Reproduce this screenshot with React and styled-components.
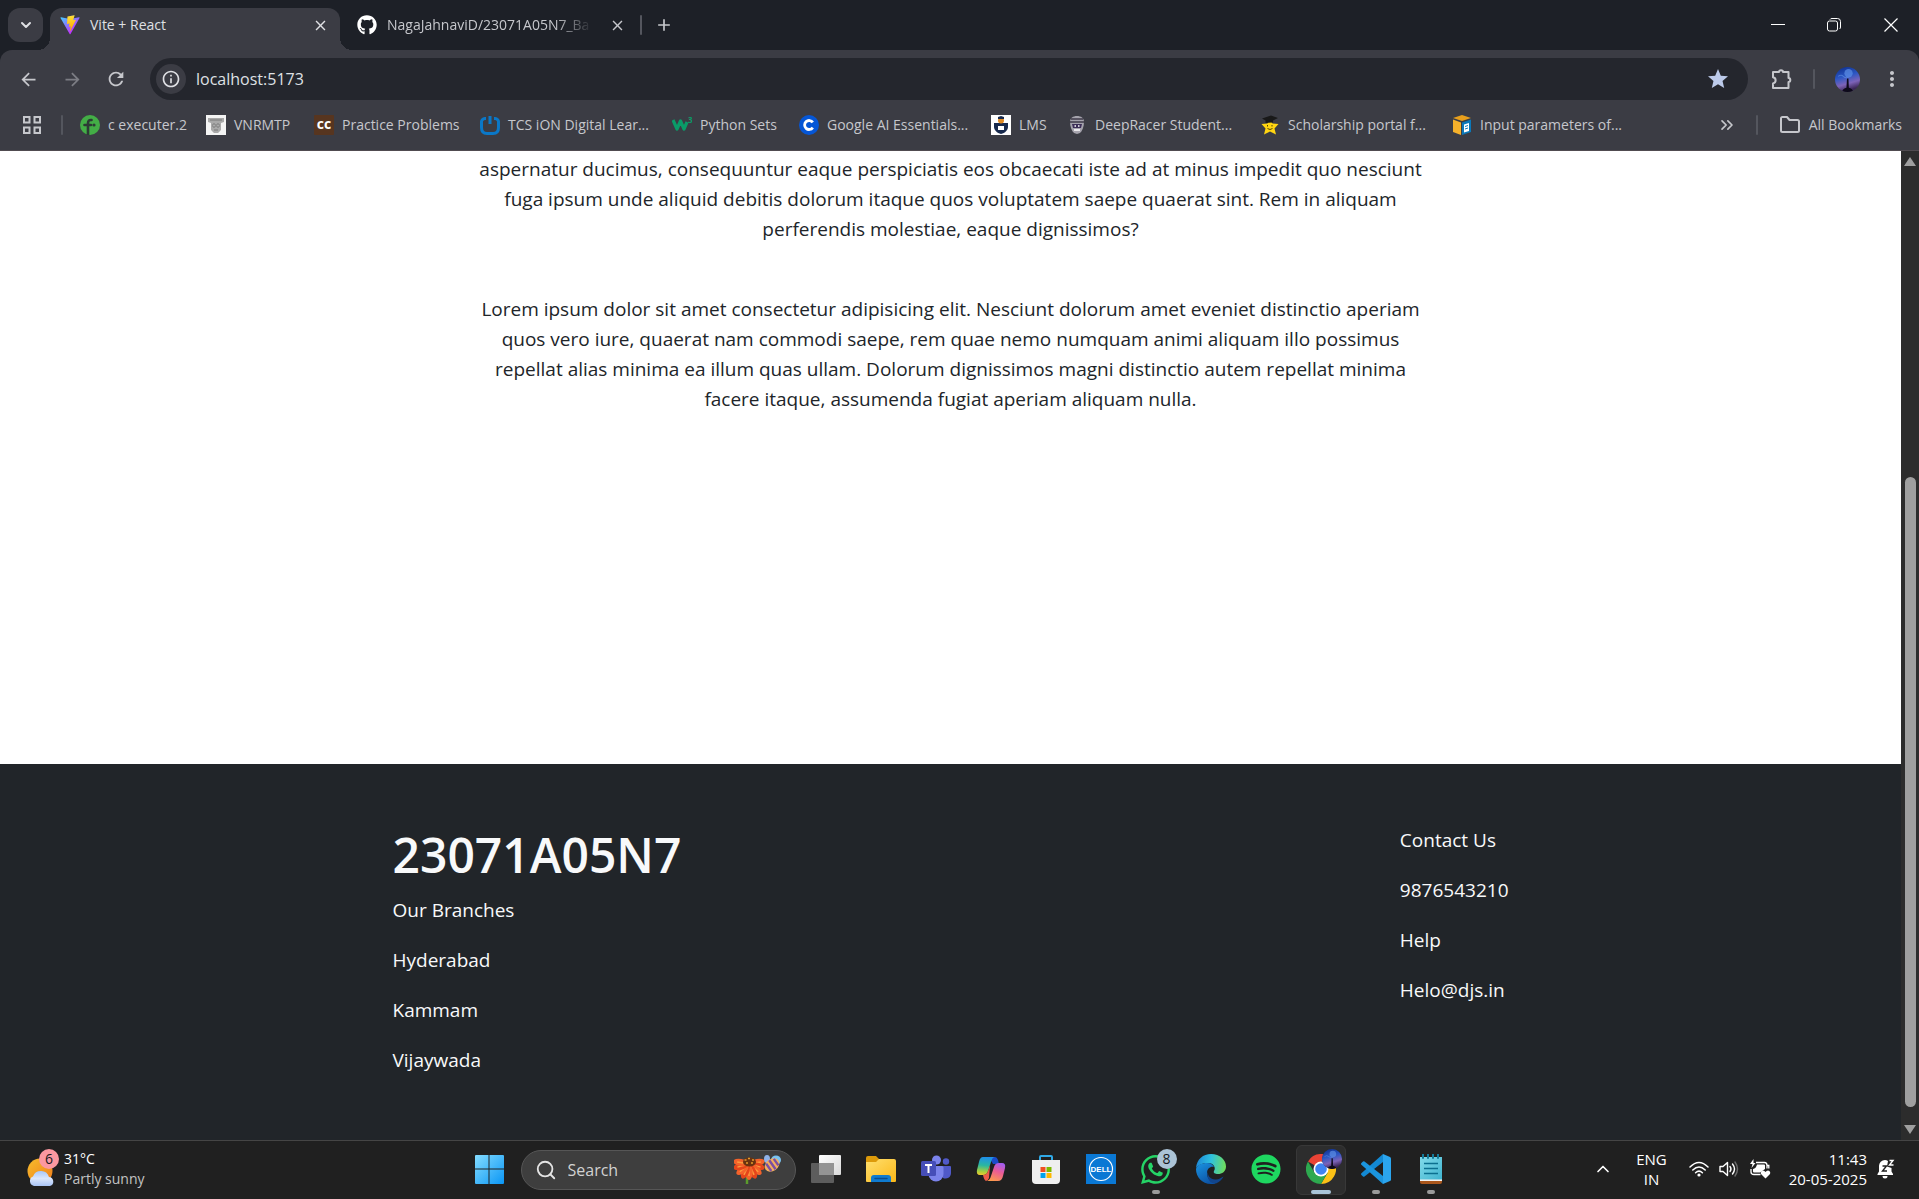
import React from "react";
import styled, { createGlobalStyle, css } from "styled-components";
import { FaGithub, FaWhatsapp, FaSpotify } from "react-icons/fa";
import {
  MdArrowBack,
  MdArrowForward,
  MdRefresh,
  MdInfoOutline,
  MdStar,
  MdMoreVert,
  MdClose,
  MdAdd,
} from "react-icons/md";
import { ChevronDown, ChevronUp, ChevronsRight, Search } from "lucide-react";

const color = {
  strip: "#1d2027",
  toolbar: "#3b3c44",
  field: "#24262d",
  text: "#dfe0e4",
  muted: "#c6c7cc",
  dark: "#212529",
  taskbar: "#202020",
};

const sans = `"Segoe UI", "Open Sans", "Noto Sans", sans-serif`;

const Global = createGlobalStyle`
  *, *::before, *::after { box-sizing: border-box; }
  html, body { margin: 0; height: 100%; background: ${color.taskbar}; }
  body { font-family: ${sans}; overflow: hidden; }
  button, input { font: inherit; color: inherit; }
  p, h1 { margin: 0; padding: 0; }
  svg { display: block; flex: none; }
`;

const Screen = styled.div`
  display: flex;
  flex-direction: column;
  height: 100vh;
`;

const IconButton = styled.button`
  display: flex;
  align-items: center;
  justify-content: center;
  flex: none;
  width: ${(p) => p.$w || 44}px;
  height: ${(p) => p.$h || 34}px;
  padding: 0;
  border: 0;
  border-radius: 12px;
  background: ${(p) => p.$bg || "transparent"};
  color: ${(p) => p.$color || color.muted};
`;

const Divider = styled.span`
  flex: none;
  width: 2px;
  height: 20px;
  margin: 0 ${(p) => p.$m || 0}px;
  border-radius: 1px;
  background: #54565e;
`;

/* ---------- Tab strip ---------- */

const TabStrip = styled.div`
  display: flex;
  align-items: center;
  height: 50px;
  padding-left: 8px;
  background: ${color.strip};
`;

const Tab = styled.div`
  position: relative;
  display: flex;
  align-items: center;
  gap: 10px;
  width: ${(p) => p.$w}px;
  height: 42px;
  padding: 0 10px 8px ${(p) => (p.$active ? 10 : 17)}px;
  align-self: flex-end;
  font-size: 14px;
  color: ${color.muted};
  ${(p) =>
    p.$active &&
    css`
      margin-left: 7px;
      border-radius: 12px 12px 0 0;
      background: ${color.toolbar};
      color: ${color.text};
      &::before,
      &::after {
        content: "";
        position: absolute;
        bottom: 0;
        width: 12px;
        height: 12px;
      }
      &::before {
        right: 100%;
        background: radial-gradient(circle at 0 0, transparent 12px, ${color.toolbar} 12px);
      }
      &::after {
        left: 100%;
        background: radial-gradient(circle at 100% 0, transparent 12px, ${color.toolbar} 12px);
      }
    `}
`;

const TabTitle = styled.span`
  flex: 1;
  line-height: 20px;
  white-space: nowrap;
  ${(p) => p.$fade && css`
    mask-image: linear-gradient(90deg, #000 80%, transparent 98%);
  `}
`;

const WindowControls = styled.div`
  display: flex;
  margin-left: auto;
`;

/* ---------- Toolbar ---------- */

const ToolbarWrap = styled.div`
  background: ${color.strip};
`;

const Toolbar = styled.div`
  display: flex;
  align-items: center;
  height: 58px;
  padding: 0 5px 0 6px;
  border-radius: 12px 12px 0 0;
  background: ${color.toolbar};
`;

const Omnibox = styled.form`
  display: flex;
  align-items: center;
  flex: 1;
  height: 42px;
  margin: 0 12px;
  padding: 0 8px 0 6px;
  border-radius: 21px;
  background: ${color.field};
`;

const SiteInfo = styled(IconButton)`
  border-radius: 50%;
`;

const UrlInput = styled.input`
  flex: 1;
  min-width: 0;
  height: 30px;
  margin-left: 10px;
  padding: 0;
  border: 0;
  outline: 0;
  background: transparent;
  color: ${color.text};
  font-size: 16px;
`;

/* ---------- Bookmarks ---------- */

const BookmarkBar = styled.nav`
  display: flex;
  align-items: center;
  height: 43px;
  padding: 0 17px 8px 10px;
  border-bottom: 1px solid #504b50;
  background: ${color.toolbar};
  font-size: 14px;
  color: ${color.muted};
`;

const Bookmarks = styled.div`
  display: flex;
  flex: 1;
  margin-left: 10px;
  min-width: 0;
  overflow: hidden;
`;

const Bookmark = styled.a`
  display: flex;
  align-items: center;
  gap: 8px;
  flex: none;
  width: ${(p) => (p.$w ? p.$w + "px" : "auto")};
  height: 30px;
  line-height: 30px;
  color: inherit;
  text-decoration: none;
  white-space: nowrap;
`;

/* ---------- Page ---------- */

const Viewport = styled.div`
  display: flex;
  flex: 1;
  min-height: 0;
`;

const Page = styled.main`
  display: flex;
  flex-direction: column;
  flex: 1;
  overflow: hidden;
  background: #fff;
  font-size: 19px;
  line-height: 30px;
`;

const Article = styled.article`
  display: flex;
  flex-direction: column;
  gap: 50px;
  flex: 1;
  width: 50%;
  margin: 0 auto;
  padding-top: 3px;
  color: ${color.dark};
  text-align: center;
  white-space: nowrap;
  p { display: flex; flex-direction: column; align-items: center; }
`;

const Footer = styled.footer`
  padding: 61px 20px 45px;
  background: ${color.dark};
  color: #f8f9fa;
`;

const FooterInner = styled.div`
  display: flex;
  justify-content: space-between;
  max-width: 1116px;
  margin: 0 auto;
  h1 {
    margin-bottom: 10px;
    font-size: 48px;
    font-weight: 600;
    line-height: 60px;
  }
  p { margin-bottom: 20px; }
`;

const Contact = styled.div`
  min-width: 108px;
`;

const Scrollbar = styled.div`
  display: flex;
  flex-direction: column;
  align-items: center;
  justify-content: space-between;
  width: 18px;
  padding: 6px 0;
  background: #2c2c2c;
`;

const Track = styled.div`
  display: flex;
  flex-direction: column;
  flex: 1;
  width: 11px;
  padding-bottom: 18px;
`;

const Thumb = styled.div`
  flex: 0 0 67%;
  margin-top: auto;
  border-radius: 6px;
  background: #9f9f9f;
`;

const ScrollArrow = styled.span`
  border: 6px solid transparent;
  ${(p) => (p.$up ? "border-top: 0; border-bottom: 9px solid #9f9f9f;" : "border-bottom: 0; border-top: 9px solid #9f9f9f;")}
`;

/* ---------- Taskbar ---------- */

const Taskbar = styled.footer`
  display: grid;
  grid-template-columns: 1fr auto 1fr;
  align-items: center;
  flex: none;
  height: 59px;
  border-top: 1px solid #454545;
  background: ${color.taskbar};
  color: #fff;
  font-size: 14px;
  line-height: 20px;
`;

const Weather = styled.button`
  display: flex;
  align-items: center;
  justify-self: start;
  gap: 9px;
  padding: 0 0 3px;
  margin-left: 27px;
  border: 0;
  background: transparent;
  text-align: left;
  small { display: block; font-size: 14px; color: #c3c3c3; }
`;

const WeatherIcon = styled.span`
  position: relative;
  display: flex;
  align-items: flex-end;
  width: 28px;
  height: 40px;
  padding-bottom: 3px;
`;

const Badge = styled.span`
  position: absolute;
  top: ${(p) => p.$top}px;
  right: ${(p) => p.$right}px;
  width: 20px;
  height: 20px;
  border-radius: 50%;
  background: ${(p) => p.$bg};
  color: #16191c;
  font-size: 14px;
  line-height: 20px;
  text-align: center;
`;

const Apps = styled.div`
  display: flex;
  align-items: center;
  gap: 5px;
`;

const AppButton = styled.button`
  position: relative;
  display: flex;
  align-items: center;
  justify-content: center;
  width: 50px;
  height: 50px;
  padding: 0 0 2px;
  border: 1px solid ${(p) => (p.$active ? "#383838" : "transparent")};
  border-radius: 6px;
  background: ${(p) => (p.$active ? "#2d2d2d" : "transparent")};
  ${(p) =>
    (p.$running || p.$active) &&
    css`
      &::after {
        content: "";
        position: absolute;
        bottom: 0;
        left: 50%;
        width: ${p.$active ? 20 : 8}px;
        height: 4px;
        margin-left: ${p.$active ? -10 : -4}px;
        border-radius: 2px;
        background: ${p.$active ? "#a9c4d8" : "#9a9a9a"};
      }
    `}
`;

const SearchBox = styled.label`
  display: flex;
  align-items: center;
  gap: 11px;
  width: 275px;
  height: 40px;
  margin-left: 2px;
  padding: 0 13px;
  border: 1px solid #565656;
  border-radius: 20px;
  background: #3e3e3e;
  input {
    flex: 1;
    min-width: 0;
    padding: 0;
    border: 0;
    outline: 0;
    background: transparent;
    font-size: 16px;
  }
  input::placeholder { color: #d2d2d2; opacity: 1; }
`;

const Tray = styled.div`
  display: flex;
  align-items: center;
  justify-content: flex-end;
  padding: 0 24px 3px 0;
`;

const TrayButton = styled.button`
  display: flex;
  align-items: center;
  gap: 10px;
  margin-left: ${(p) => p.$gap || 0}px;
  padding: 0;
  border: 0;
  background: transparent;
  color: #fff;
  font-size: 15px;
  line-height: 20px;
  text-align: ${(p) => p.$align || "center"};
`;

/* ---------- Drawings ---------- */

const ViteIcon = () => (
  <svg width="20" height="20" viewBox="0 0 410 404">
    <defs>
      <linearGradient id="va" x1="6" y1="33" x2="235" y2="344" gradientUnits="userSpaceOnUse">
        <stop stopColor="#41D1FF" /><stop offset="1" stopColor="#BD34FE" />
      </linearGradient>
      <linearGradient id="vb" x1="194" y1="9" x2="236" y2="293" gradientUnits="userSpaceOnUse">
        <stop stopColor="#FFEA83" /><stop offset=".08" stopColor="#FFDD35" /><stop offset="1" stopColor="#FFA800" />
      </linearGradient>
    </defs>
    <path fill="url(#va)" d="M399.6 59.5 215.6 388.5c-3.800 6.800-13.500 6.800-17.400.1L10.600 59.600C6.400 52.300 12.700 43.300 21.100 44.900L205.200 77.800c1.200.2 2.400.2 3.500 0L389 44.900c8.300-1.500 14.700 7.400 10.600 14.600Z" />
    <path fill="url(#vb)" d="M293 1.600 156.800 28.300c-2.200.4-3.900 2.300-4 4.600l-8.400 141.500c-.2 3.300 2.900 5.900 6.100 5.200l37.900-8.800c3.600-.8 6.700 2.300 6 5.900l-11.300 55.100c-.8 3.700 2.700 6.900 6.300 5.800l23.400-7.100c3.600-1.100 7.100 2.100 6.300 5.800l-17.900 86.600c-1.100 5.400 6.100 8.400 9.100 3.700l2-3.100 111-221.400c1.900-3.700-1.300-7.900-5.400-7.200l-39 7.500c-3.700.7-6.800-2.700-5.700-6.300l25.500-88.300c1-3.600-2.100-7.100-5.700-6.300Z" />
  </svg>
);

const MinimizeIcon = () => (
  <svg width="14" height="14" viewBox="0 0 14 14"><path d="M0 6.500h14" stroke="#fff" /></svg>
);
const RestoreIcon = () => (
  <svg width="14" height="14" viewBox="0 0 14 14" fill="none" stroke="#fff">
    <rect x=".5" y="3" width="10" height="10" rx="2" />
    <path d="M3 1.500C3.400.8 4 .5 5 .5h5.500a3 3 0 0 1 3 3V9c0 1-.4 1.700-1 2" />
  </svg>
);
const WindowCloseIcon = () => (
  <svg width="14" height="14" viewBox="0 0 14 14"><path d="M.5.5l13 13M13.500.5l-13 13" stroke="#fff" strokeWidth="1.200" /></svg>
);
const PuzzleIcon = () => (
  <svg width="22" height="22" viewBox="0 0 22 22" fill="none" stroke="#c6c7cc" strokeWidth="2" strokeLinejoin="round">
    <path d="M2 4h6a2 1.800 0 0 1 4 0h5.500v6a1.800 2 0 0 1 0 4v6H2v-4.500c3.500-.8 3.500-5.500 0-6.200Z" />
  </svg>
);
const Sky = ({ size, id }) => (
  <svg width={size} height={size} viewBox="0 0 24 24">
    <defs>
      <linearGradient id={id} x1="0" y1="0" x2=".3" y2="1">
        <stop stopColor="#0b2a86" /><stop offset=".45" stopColor="#2b57c4" /><stop offset=".75" stopColor="#7d63b8" /><stop offset="1" stopColor="#3b2656" />
      </linearGradient>
      <clipPath id={id + "c"}><circle cx="12" cy="12" r="12" /></clipPath>
    </defs>
    <g clipPath={`url(#${id}c)`}>
      <rect width="24" height="24" fill={`url(#${id})`} />
      <circle cx="13" cy="6" r="4" fill="#5c8fe6" opacity=".7" />
      <path d="M3 9q3-2 5 0t5 1" stroke="#6ea0ee" fill="none" opacity=".5" />
      <path d="M11.500 11h1.400l.4 9c2 .5 3.500 1.500 4.500 4H6.500c1-2.500 2.500-3.500 4.500-4Z" fill="#0d0a1a" />
    </g>
  </svg>
);
const AppsIcon = () => (
  <svg width="20" height="20" viewBox="0 0 20 20" fill="none" stroke="#c6c7cc" strokeWidth="2">
    <path d="M2 2h5.500v5.500H2ZM12.500 2H18v5.500h-5.500ZM2 12.500h5.500V18H2ZM12.500 12.500H18V18h-5.500Z" />
  </svg>
);
const FolderOutline = () => (
  <svg width="22" height="20" viewBox="0 0 22 20" fill="none" stroke="#c6c7cc" strokeWidth="2" strokeLinejoin="round">
    <path d="M2 3.500c0-.8.500-1.500 1.500-1.500H8l2.500 3h8c1 0 1.500.6 1.500 1.500v9c0 1-.6 1.500-1.500 1.500h-15c-1 0-1.500-.6-1.500-1.500Z" />
  </svg>
);

const Fav = (p) => <svg width="20" height="20" viewBox="0 0 20 20" fontFamily="Open Sans, sans-serif" fontWeight="700">{p.children}</svg>;

const favicons = {
  exec: (
    <Fav>
      <circle cx="10" cy="10" r="10" fill="#43ad46" />
      <path d="M8 20V8.500Q8 4.500 11.500 5M4.500 10H11" stroke="#2c3a35" strokeWidth="2.600" fill="none" strokeLinecap="round" />
      <circle cx="14" cy="10" r="1.600" fill="#2c3a35" />
    </Fav>
  ),
  vnr: (
    <Fav>
      <rect width="20" height="20" fill="#f4f4f4" />
      <path d="M2 3h16v4l-3 1v7l-3 3H8l-3-3V8L2 7Z" fill="#a9a9a9" />
      <path d="M4 5h12M7 9h2v3H7zM11 9h2v3h-2zM8 15h4" stroke="#787878" fill="#ddd" />
    </Fav>
  ),
  cc: (
    <Fav>
      <rect width="20" height="20" rx="1" fill="#57351f" />
      <text x="10" y="14" fontSize="14" fill="#fff" textAnchor="middle">cc</text>
    </Fav>
  ),
  ion: (
    <Fav>
      <path d="M6 3.500H5a3.500 3.500 0 0 0-3.500 4v5c0 4 2 6 5.500 6h6c3.500 0 5.500-2 5.500-6v-5a3.500 3.500 0 0 0-3.500-4h-1M10 1v8" stroke="#0a78c8" strokeWidth="3" fill="none" />
    </Fav>
  ),
  w3: (
    <Fav>
      <path d="M1 5l4 9 3.500-8 3.500 8 3-7" stroke="#0a9b68" strokeWidth="3.200" fill="none" strokeLinejoin="round" />
      <text x="16" y="8" fontSize="8" fill="#0a9b68">3</text>
    </Fav>
  ),
  coursera: (
    <Fav>
      <circle cx="10" cy="10" r="10" fill="#0556d6" />
      <path d="M13.800 7.400a4.500 4.500 0 1 0 0 5.200" stroke="#fff" strokeWidth="2.800" fill="none" />
    </Fav>
  ),
  lms: (
    <Fav>
      <rect width="20" height="20" fill="#fff" />
      <path d="M3 8h14v4c0 3-3 6-7 7-4-1-7-4-7-7Z" fill="#17294d" />
      <circle cx="10" cy="5.500" r="3" fill="#e08a22" />
      <path d="M7 2l3-1 3 1v2H7Z" fill="#17294d" />
      <path d="M7 11h6v4H7Z" fill="#fff" />
    </Fav>
  ),
  racer: (
    <Fav>
      <path d="M10 1c4 0 7 2 7 6 0 5-2 9-4 11l-3 1-3-1C5 16 3 12 3 7c0-4 3-6 7-6Z" fill="#a5a3ad" />
      <path d="M3 7h14M4 4h12" stroke="#3e3a48" strokeWidth="1.500" />
      <path d="M5 9h10l-1 4H6Z" fill="#3d2f58" />
      <path d="M7 15h6M7.500 11h1.500M11 11h1.500" stroke="#fff" strokeWidth="1.500" />
    </Fav>
  ),
  star: (
    <Fav>
      <path d="M10 4l2.500 4.500 6 .5-4 4.500 1.500 6-6-3-6 3 1.500-6-4-4.500 6-.5Z" fill="#ffd511" />
      <path d="M2 3.500 11 .5 18 3l-5 2.500v2L5.500 8V5.500Z" fill="#191919" />
      <path d="M7.500 10v1.500M12 10v1.500M7.500 13.500q2.500 2 5 0" stroke="#554400" fill="none" />
    </Fav>
  ),
  box: (
    <Fav>
      <path d="M1 3l9-3 9 3-9 3Z" fill="#e89f1c" />
      <path d="M1 4.500l8 3V20l-8-3Z" fill="#f5b12b" />
      <path d="M10 7.500l9-3V17l-9 3Z" fill="#0b78b9" />
      <path d="M12 9.500l5-1.500v8l-5 1.500Z" fill="#fff" />
      <path d="M13 11.500l3-1M13 14l3-1" stroke="#0b78b9" />
    </Fav>
  ),
};

const SunCloud = () => (
  <svg width="28" height="28" viewBox="0 0 28 28">
    <defs>
      <linearGradient id="sun" x1="0" y1="0" x2="1" y2="1"><stop stopColor="#f7bd2c" /><stop offset="1" stopColor="#ef7c1a" /></linearGradient>
      <linearGradient id="cloud" x1="0" y1="0" x2="0" y2="1"><stop stopColor="#a9c8fa" /><stop offset=".5" stopColor="#dbe7fd" /><stop offset="1" stopColor="#a9c4f5" /></linearGradient>
    </defs>
    <circle cx="13" cy="13" r="12.500" fill="url(#sun)" />
    <path d="M7 28a5 5 0 0 1-1-9.500 8.500 8.500 0 0 1 16 .5 4.600 4.600 0 0 1 1 9Z" fill="url(#cloud)" />
  </svg>
);

const petals = [-10, 15, 40, 65, 90, 115, 140, 165, 190];

const Flower = () => (
  <svg width="48" height="30" viewBox="0 0 48 30">
    <path d="M13 20v9" stroke="#5b9b2c" strokeWidth="2.500" />
    {petals.map((a, i) => (
      <g key={a} transform={`translate(15 9) rotate(${a})`}>
        <ellipse cx="8.500" cy="0" rx="7.500" ry="3.600" fill={i % 2 ? "#e5451b" : "#f4622a"} />
        <path d="M4 0h8" stroke="#fd9a3c" strokeWidth="1.500" />
      </g>
    ))}
    <ellipse cx="15.500" cy="7" rx="6.500" ry="4.500" fill="#6a320f" />
    <path d="M10.500 5h2M14 3.500h2M18 5h2M12 8h2M17 8h2" stroke="#e39b2b" strokeWidth="1.500" />
    <ellipse cx="42" cy="5" rx="5" ry="4.500" fill="#79c3f2" />
    <ellipse cx="33" cy="4" rx="3" ry="4" fill="#8fb2e8" />
    <g transform="rotate(-35 38 10)">
      <ellipse cx="38" cy="10" rx="8" ry="6" fill="#f2ae5e" />
      <path d="M34 5.500v9M38.500 4.500v11M43 6v8" stroke="#7a4fa3" strokeWidth="2.400" />
    </g>
  </svg>
);

const App30 = ({ children, ...p }) => <svg width="30" height="30" viewBox="0 0 30 30" {...p}>{children}</svg>;

const WindowsIcon = () => (
  <App30>
    <defs><linearGradient id="win" x1="0" y1="0" x2="1" y2="1"><stop stopColor="#84dcff" /><stop offset="1" stopColor="#0a96f5" /></linearGradient></defs>
    <path fill="url(#win)" d="M1 2q0-1 1-1h12.500v13.500H1ZM15.500 1H29q1 0 1 1v12.500H15.500ZM1 15.500h13.500V30H2q-1 0-1-1ZM15.500 15.500H30V29q0 1-1 1H15.500Z" />
  </App30>
);
const TaskViewIcon = () => (
  <App30>
    <defs><linearGradient id="tv" x1="0" y1="0" x2="1" y2="1"><stop stopColor="#fff" /><stop offset="1" stopColor="#d9d9d9" /></linearGradient></defs>
    <rect x="0" y="9" width="23" height="20" rx="1" fill="#5d5d5d" />
    <rect x="8" y="1" width="22" height="20" rx="1" fill="url(#tv)" />
    <path d="M8 9h15v12H8Z" fill="#949494" />
  </App30>
);
const ExplorerIcon = () => (
  <App30>
    <defs><linearGradient id="fx" x1="0" y1="0" x2="1" y2="1"><stop stopColor="#ffdf6f" /><stop offset="1" stopColor="#fbb818" /></linearGradient></defs>
    <path d="M0 4q0-2 2-2h8l3 3v6H0Z" fill="#dd9a0a" />
    <path d="M0 8h10l3-3h15q2 0 2 2v20q0 1-1 1H1q-1 0-1-1Z" fill="url(#fx)" />
    <path d="M5 28v-4q0-3 3-3h14q3 0 3 3v4Z" fill="#0f7bd0" />
    <path d="M9 24.500h12" stroke="#0a4c8f" strokeWidth="1.500" strokeLinecap="round" />
  </App30>
);
const TeamsIcon = () => (
  <App30>
    <circle cx="15.500" cy="6" r="4.500" fill="#7b83eb" />
    <circle cx="25" cy="7.500" r="3.200" fill="#5059c9" />
    <path d="M20 12h9q1 0 1 1v6a5.500 5.500 0 0 1-8 5Z" fill="#5059c9" />
    <path d="M8 12h13q1.500 0 1.500 1.500V20a7.500 7.500 0 0 1-15 0Z" fill="#7b83eb" />
    <rect x="0" y="7" width="15" height="15" rx="1.500" fill="#464eb8" />
    <path d="M4 11h7M7.500 11v8" stroke="#fff" strokeWidth="2" />
  </App30>
);
const CopilotIcon = () => (
  <App30>
    <defs>
      <linearGradient id="ca" x1=".3" y1="0" x2=".2" y2="1"><stop stopColor="#1f8fe8" /><stop offset=".45" stopColor="#2ab7a0" /><stop offset=".8" stopColor="#a8cf3d" /><stop offset="1" stopColor="#f1c72e" /></linearGradient>
      <linearGradient id="cb" x1=".7" y1="0" x2=".3" y2="1"><stop stopColor="#a45df0" /><stop offset=".45" stopColor="#ec5c94" /><stop offset="1" stopColor="#fd9a4c" /></linearGradient>
    </defs>
    <path d="M13 3h6q2 0 3 3l1 4h-6Z" fill="#1b4bc9" />
    <path d="M7 3h11q-2 1-3 5l-3 9q-1 4-5 4H4q-4 0-3-5l2-8q1-5 4-5Z" fill="url(#ca)" />
    <path d="M23 9h3q4 0 3 5l-2 8q-1 5-5 5H11q3-1 4-5l3-9q1-4 5-4Z" fill="url(#cb)" />
    <path d="M7 21q4 0 5-4l2-6-1 13q-1 3-3 3-2-1-3-6Z" fill="#ef5b4a" />
  </App30>
);
const StoreIcon = () => (
  <App30>
    <path d="M9 7V3q0-1 1-1h10q1 0 1 1v4" fill="none" stroke="#30a9e6" strokeWidth="2" />
    <path d="M1 6h28v20q0 4-4 4H5q-4 0-4-4Z" fill="#efefef" />
    <path d="M9.500 13h5v5h-5Z" fill="#f04f22" /><path d="M15.500 13h5v5h-5Z" fill="#7db900" />
    <path d="M9.500 19h5v5h-5Z" fill="#00a2ec" /><path d="M15.500 19h5v5h-5Z" fill="#feb800" />
  </App30>
);
const DellIcon = () => (
  <App30>
    <rect width="30" height="30" fill="#0a78d4" />
    <circle cx="15" cy="15" r="11.500" fill="none" stroke="#fff" strokeWidth="1.200" />
    <text x="15" y="18" fontSize="8" fontWeight="700" fill="#fff" textAnchor="middle" fontFamily="Liberation Sans, sans-serif">DELL</text>
  </App30>
);
const EdgeIcon = () => (
  <App30>
    <defs>
      <linearGradient id="ea" x1="0" y1=".3" x2="1" y2=".4"><stop stopColor="#1c86d8" /><stop offset=".5" stopColor="#2fc1de" /><stop offset="1" stopColor="#6fdc5c" /></linearGradient>
      <linearGradient id="eb" x1="0" y1="0" x2=".6" y2="1"><stop stopColor="#1a94e2" /><stop offset="1" stopColor="#0c52a4" /></linearGradient>
    </defs>
    <path d="M0 14C1 5 7 0 15 0c9 0 15 6 15 12.500 0 5-4 7.500-8 7.500-3 0-5-1-4-3 2-3 0-8-6-8-5 0-10 2-12 5Z" fill="url(#ea)" />
    <path d="M0 15c1-4 6-6 11-6 4 0 6 2 7 4-3-1-7 1-7 6 0 6 5 11 10 10-2 1-4 1-6 1C6 30 0 23 0 15Z" fill="url(#eb)" />
    <path d="M12 17c-1 5 3 9 8 8.500 3 0 5-1.500 7.500-3C26 26 22 29.500 18 29.500c-5-1-8-7-6-12.500Z" fill="#11458c" />
  </App30>
);
const ChromeIcon = () => (
  <App30>
    <path d="M15 15 2 7.500A15 15 0 0 1 28 7.500H15Z" fill="#ea4335" />
    <path d="M15 15 28 7.500A15 15 0 0 1 15 30l6.500-11Z" fill="#fbc116" />
    <path d="M15 15l6.500 3.700L15 30A15 15 0 0 1 2 7.500l6.500 11.200Z" fill="#2da94f" />
    <path d="M8 8h20l-7 4Z" fill="#ea4335" />
    <circle cx="15" cy="15" r="7.500" fill="#fff" /><circle cx="15" cy="15" r="5.800" fill="#3f83f2" />
  </App30>
);
const CodeIcon = () => (
  <App30>
    <path d="M22 0l7 3q1 .5 1 1.500v21q0 1-1 1.500l-7 3Z" fill="#2ba5ee" />
    <path d="M22 0 L22 8 3.500 22.500Q2.500 23 2 22.500L.4 21q-.8-1 0-1.800Z" fill="#1389d3" />
    <path d="M22 30V22L3.500 7.500Q2.500 7 2 7.500L.4 9q-.8 1 0 1.800Z" fill="#1b95de" />
  </App30>
);
const NotepadIcon = () => (
  <App30>
    <defs><linearGradient id="np" x1="0" y1="0" x2="1" y2="1"><stop stopColor="#82dbea" /><stop offset="1" stopColor="#3fb3cf" /></linearGradient></defs>
    <path d="M4 26h22v2q0 2-2 2H6q-2 0-2-2Z" fill="#a9561c" />
    <path d="M4 25h22v2H4Z" fill="#f2f2f2" />
    <path d="M4 3h22v22.500H4Z" fill="url(#np)" />
    <path d="M8 9.500h14M8 14.500h14M8 19.500h14" stroke="#0b6f8f" strokeWidth="1.600" />
    <path d="M7 0v4M12 0v4M17 0v4M22 0v4" stroke="#137a99" strokeWidth="2" strokeLinecap="round" />
  </App30>
);
const WifiIcon = () => (
  <svg width="20" height="18" viewBox="0 0 20 18" fill="none" stroke="#fff" strokeWidth="1.500" strokeLinecap="round">
    <path d="M1 7q9-9 18 0M3.800 10q6.200-6 12.400 0M6.600 12.700q3.400-3.200 6.800 0" />
    <circle cx="10" cy="15" r="1.600" fill="#fff" stroke="none" />
  </svg>
);
const VolumeIcon = () => (
  <svg width="20" height="18" viewBox="0 0 20 18" fill="none" stroke="#fff" strokeWidth="1.400" strokeLinecap="round" strokeLinejoin="round">
    <path d="M1 6.500h3l4.500-4v13l-4.500-4H1ZM11 6.500q2 2.500 0 5M13.500 4q4 5 0 10" />
    <path d="M16 2q5 7 0 14" stroke="#6a6a6a" />
  </svg>
);
const BatteryIcon = () => (
  <svg width="22" height="20" viewBox="0 0 22 20" fill="none" stroke="#fff" strokeWidth="1.300">
    <path d="M7 3.500h8.500q2.500 0 2.500 3v3M2 10v3q0 2.500 3 2.500h6.500M18 6.500h1.800v3" />
    <path d="M8 5.500h7q1 0 1 1V10l-5 3.500H5q-1 0-1-1V10q3-.5 4-4.500Z" fill="#fff" stroke="none" />
    <path d="M4.500 0 1 5h2.500L2.500 9 6.500 4H4.500Z" fill="#fff" stroke="none" />
    <path d="M16.500 19.500 12 15q-1-3 2-3.500 1.500 0 2.500 1.500 1-1.500 2.500-1.500 3 .5 2 3.500Z" fill="#fff" stroke="none" />
  </svg>
);
const BellIcon = () => (
  <svg width="18" height="20" viewBox="0 0 18 20">
    <path d="M8 1a6 6 0 0 0-6 6v5.500L.5 15v1H16v-1l-1.500-2.500V9L10 7.500 11 2Q9.500 1 8 1Z" fill="#fff" />
    <path d="M5.500 17a2.500 2.500 0 0 0 5 0Z" fill="#fff" />
    <path d="M5.500 7h4L5.500 12h4.500" fill="none" stroke="#202020" strokeWidth="1.400" />
    <path d="M12.500 1.500h3.500L12.500 6H16.500" fill="none" stroke="#fff" strokeWidth="1.400" />
  </svg>
);

/* ---------- Data ---------- */

const bookmarks = [
  ["c executer.2", "exec", 126],
  ["VNRMTP", "vnr", 108],
  ["Practice Problems", "cc", 166],
  ["TCS iON Digital Lear...", "ion", 192],
  ["Python Sets", "w3", 127],
  ["Google AI Essentials...", "coursera", 192],
  ["LMS", "lms", 76],
  ["DeepRacer Student...", "racer", 193],
  ["Scholarship portal f...", "star", 192],
  ["Input parameters of...", "box", 0],
];

const paragraphs = [
  [
    "aspernatur ducimus, consequuntur eaque perspiciatis eos obcaecati iste ad at minus impedit quo nesciunt",
    "fuga ipsum unde aliquid debitis dolorum itaque quos voluptatem saepe quaerat sint. Rem in aliquam",
    "perferendis molestiae, eaque dignissimos?",
  ],
  [
    "Lorem ipsum dolor sit amet consectetur adipisicing elit. Nesciunt dolorum amet eveniet distinctio aperiam",
    "quos vero iure, quaerat nam commodi saepe, rem quae nemo numquam animi aliquam illo possimus",
    "repellat alias minima ea illum quas ullam. Dolorum dignissimos magni distinctio autem repellat minima",
    "facere itaque, assumenda fugiat aperiam aliquam nulla.",
  ],
];

const apps = [
  { name: "Task view", icon: <TaskViewIcon /> },
  { name: "File Explorer", icon: <ExplorerIcon /> },
  { name: "Teams", icon: <TeamsIcon /> },
  { name: "Copilot", icon: <CopilotIcon /> },
  { name: "Store", icon: <StoreIcon /> },
  { name: "Dell", icon: <DellIcon /> },
  {
    name: "WhatsApp",
    icon: <FaWhatsapp size={33} color="#25d366" />,
    running: true,
    badge: <Badge $top={3} $right={3} $bg="#abc3d6">8</Badge>,
  },
  { name: "Edge", icon: <EdgeIcon /> },
  { name: "Spotify", icon: <FaSpotify size={30} color="#1ed760" /> },
  {
    name: "Chrome",
    icon: <ChromeIcon />,
    active: true,
    badge: <Badge $top={3} $right={3} $bg="#1c2c66"><Sky size={20} id="skyBadge" /></Badge>,
  },
  { name: "Visual Studio Code", icon: <CodeIcon />, running: true },
  { name: "Notepad", icon: <NotepadIcon />, running: true },
];

export default function App() {
  return (
    <Screen>
      <Global />
      <TabStrip>
        <IconButton $w={35} $bg={color.toolbar} $color={color.text} aria-label="Search tabs"><ChevronDown size={16} strokeWidth={3} /></IconButton>
        <Tab $active $w={290}>
          <ViteIcon />
          <TabTitle>Vite + React</TabTitle>
          <IconButton $w={20} $h={20} $color={color.text} aria-label="Close tab"><MdClose size={17} /></IconButton>
        </Tab>
        <Tab $w={297}>
          <FaGithub size={20} color="#fff" />
          <TabTitle $fade>NagaJahnaviD/23071A05N7_Ba</TabTitle>
          <IconButton $w={20} $h={20} aria-label="Close tab"><MdClose size={17} /></IconButton>
        </Tab>
        <Divider $m={3} />
        <IconButton $w={38} aria-label="New tab"><MdAdd size={20} /></IconButton>
        <WindowControls>
          <IconButton $w={56} $h={48} aria-label="Minimize"><MinimizeIcon /></IconButton>
          <IconButton $w={56} $h={48} aria-label="Restore"><RestoreIcon /></IconButton>
          <IconButton $w={57} $h={48} aria-label="Close window"><WindowCloseIcon /></IconButton>
        </WindowControls>
      </TabStrip>

      <ToolbarWrap>
        <Toolbar>
          <IconButton aria-label="Back"><MdArrowBack size={21} /></IconButton>
          <IconButton $color="#7c7d84" aria-label="Forward"><MdArrowForward size={21} /></IconButton>
          <IconButton aria-label="Reload"><MdRefresh size={22} /></IconButton>
          <Omnibox onSubmit={(e) => e.preventDefault()}>
            <SiteInfo type="button" $w={30} $h={30} $bg={color.toolbar} $color={color.text} aria-label="Site information"><MdInfoOutline size={20} /></SiteInfo>
            <UrlInput aria-label="Address" defaultValue="localhost:5173" />
            <IconButton type="button" $color="#bccaea" aria-label="Bookmark this tab"><MdStar size={24} /></IconButton>
          </Omnibox>
          <IconButton aria-label="Extensions"><PuzzleIcon /></IconButton>
          <Divider $m={9} />
          <IconButton $w={46} aria-label="Profile"><Sky size={25} id="sky" /></IconButton>
          <IconButton aria-label="Menu"><MdMoreVert size={24} /></IconButton>
        </Toolbar>
      </ToolbarWrap>

      <BookmarkBar>
        <IconButton aria-label="Apps"><AppsIcon /></IconButton>
        <Divider $m={7} />
        <Bookmarks>
          {bookmarks.map(([label, icon, w]) => (
            <Bookmark key={label} href="#" $w={w}>
              {favicons[icon]}
              <span>{label}</span>
            </Bookmark>
          ))}
        </Bookmarks>
        <IconButton aria-label="More bookmarks"><ChevronsRight size={20} /></IconButton>
        <Divider $m={7} />
        <IconButton as="span" $w={14} />
        <Bookmark href="#"><FolderOutline /><span>All Bookmarks</span></Bookmark>
      </BookmarkBar>

      <Viewport>
        <Page>
          <Article>
            {paragraphs.map((lines) => (
              <p key={lines[0]}>{lines.map((line) => <span key={line}>{line}</span>)}</p>
            ))}
          </Article>
          <Footer>
            <FooterInner>
              <div>
                <h1>23071A05N7</h1>
                <p>Our Branches</p>
                <p>Hyderabad</p>
                <p>Kammam</p>
                <p>Vijaywada</p>
              </div>
              <Contact>
                <p>Contact Us</p>
                <p>9876543210</p>
                <p>Help</p>
                <p>Helo@djs.in</p>
              </Contact>
            </FooterInner>
          </Footer>
        </Page>
        <Scrollbar>
          <ScrollArrow $up />
          <Track><Thumb /></Track>
          <ScrollArrow />
        </Scrollbar>
      </Viewport>

      <Taskbar>
        <Weather>
          <WeatherIcon>
            <SunCloud />
            <Badge $top={0} $right={-4} $bg="#fb98a0">6</Badge>
          </WeatherIcon>
          <span>31°C<small>Partly sunny</small></span>
        </Weather>
        <Apps>
          <AppButton aria-label="Start"><WindowsIcon /></AppButton>
          <SearchBox>
            <Search size={22} strokeWidth={2} color="#e4e4e4" />
            <input type="text" placeholder="Search" aria-label="Search" />
            <Flower />
          </SearchBox>
          {apps.map((a) => (
            <AppButton key={a.name} aria-label={a.name} $active={a.active} $running={a.running}>
              {a.icon}
              {a.badge}
            </AppButton>
          ))}
        </Apps>
        <Tray>
          <TrayButton aria-label="Hidden icons"><ChevronUp size={20} strokeWidth={2} /></TrayButton>
          <TrayButton $gap={23}><span>ENG<br />IN</span></TrayButton>
          <TrayButton $gap={22} aria-label="Network, volume and battery"><WifiIcon /><VolumeIcon /><BatteryIcon /></TrayButton>
          <TrayButton $gap={18} $align="right"><span>11:43<br />20-05-2025</span><BellIcon /></TrayButton>
        </Tray>
      </Taskbar>
    </Screen>
  );
}
